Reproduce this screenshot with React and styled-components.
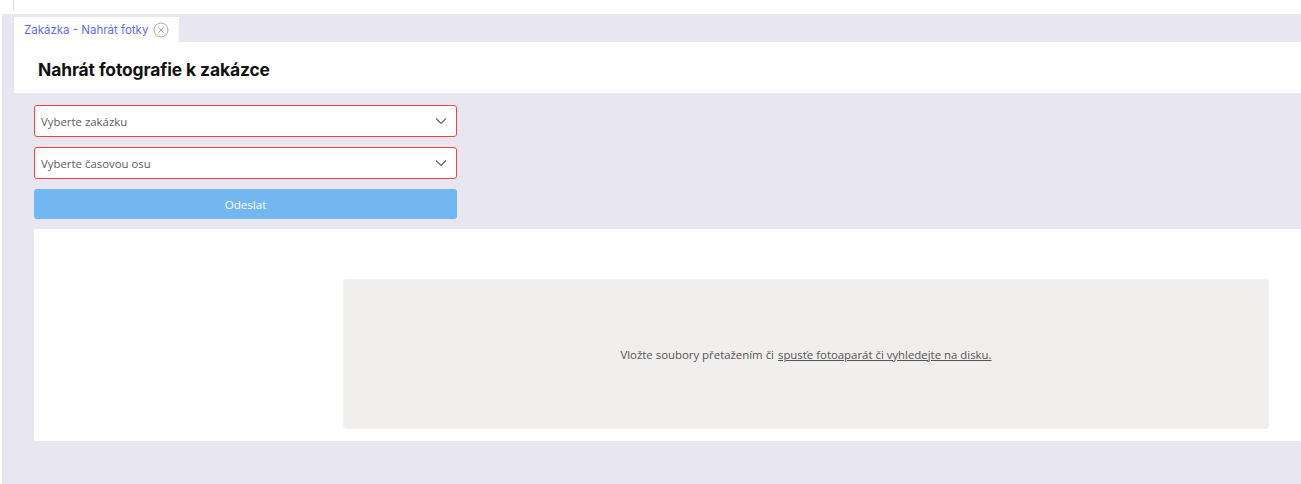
import React from 'react'
import styled, { createGlobalStyle } from 'styled-components'

const GlobalStyle = createGlobalStyle`
  html, body {
    margin: 0;
    padding: 0;
    background: #fff;
    font-family: 'Open Sans', 'Noto Sans', sans-serif;
  }
`

const Page = styled.div`
  position: relative;
  height: 484px;
  padding-top: 14px;
  box-sizing: border-box;
  overflow: hidden;
`

const TopTick = styled.div`
  position: absolute;
  left: 13px;
  top: 0;
  width: 1px;
  height: 10px;
  background: #ddd;
`

const Workspace = styled.div`
  margin-left: 2px;
  height: 470px;
  background: #e8e6f0;
  padding-top: 3px;
  box-sizing: border-box;
`

const TabBar = styled.div`
  display: flex;
  padding-left: 12px;
`

const Tab = styled.div`
  display: flex;
  align-items: center;
  gap: 5px;
  height: 25px;
  padding: 0 10px 0 10px;
  background: #fff;
  font-family: 'Inter', 'Noto Sans', sans-serif;
  font-size: 11.5px;
  color: #5c6ff2;
`

const Header = styled.div`
  margin-left: 12px;
  height: 51px;
  background: #fff;
  display: flex;
  align-items: center;
  padding-left: 24px;
  padding-top: 3px;
  box-sizing: border-box;
`

const Title = styled.h1`
  margin: 0;
  font-family: 'Inter', 'Noto Sans', sans-serif;
  font-size: 17.4px;
  font-weight: 700;
  color: #111;
  letter-spacing: -0.1px;
`

const Form = styled.div`
  display: flex;
  flex-direction: column;
  gap: 10px;
  width: 423px;
  margin: 12px 0 0 32px;
`

const Select = styled.div`
  height: 32px;
  border: 1px solid #f0443f;
  border-radius: 3px;
  background: #fff;
  display: flex;
  align-items: center;
  justify-content: space-between;
  padding: 0 9px 0 6px;
  box-sizing: border-box;
  font-size: 11.4px;
  color: #5d5d5d;
`

const Button = styled.button`
  height: 30px;
  border: none;
  border-radius: 3px;
  background: #72b7f2;
  color: #fff;
  font-family: 'Open Sans', 'Noto Sans', sans-serif;
  font-size: 11.6px;
  cursor: pointer;
`

const Panel = styled.div`
  margin: 10px 0 0 32px;
  height: 212px;
  background: #fff;
  padding: 50px 32px 12px 309px;
  box-sizing: border-box;
`

const DropZone = styled.div`
  height: 100%;
  background: #f0efed;
  border-radius: 4px;
  display: flex;
  align-items: center;
  justify-content: center;
  font-size: 11.4px;
  color: #555;
`

const DropLink = styled.span`
  text-decoration: underline;
  margin-left: 4px;
`

const Chevron = () => (
  <svg width="12" height="8" viewBox="0 0 12 8" fill="none">
    <path d="M1 1.5l5 5 5-5" stroke="#666" strokeWidth="1.2" />
  </svg>
)

const CloseIcon = () => (
  <svg width="16" height="16" viewBox="0 0 16 16" fill="none">
    <circle cx="8" cy="8" r="7" stroke="#aaa" strokeWidth="1" />
    <path d="M5.3 5.3l5.4 5.4M10.7 5.3l-5.4 5.4" stroke="#aaa" strokeWidth="1" />
  </svg>
)

const App = () => (
  <>
    <GlobalStyle />
    <Page>
      <TopTick />
      <Workspace>
        <TabBar>
          <Tab>
            Zakázka - Nahrát fotky
            <CloseIcon />
          </Tab>
        </TabBar>
        <Header>
          <Title>Nahrát fotografie k zakázce</Title>
        </Header>
        <Form>
          <Select>
            Vyberte zakázku
            <Chevron />
          </Select>
          <Select>
            Vyberte časovou osu
            <Chevron />
          </Select>
          <Button>Odeslat</Button>
        </Form>
        <Panel>
          <DropZone>
            Vložte soubory přetažením či
            <DropLink>spusťe fotoaparát či vyhledejte na disku.</DropLink>
          </DropZone>
        </Panel>
      </Workspace>
    </Page>
  </>
)

export default App
